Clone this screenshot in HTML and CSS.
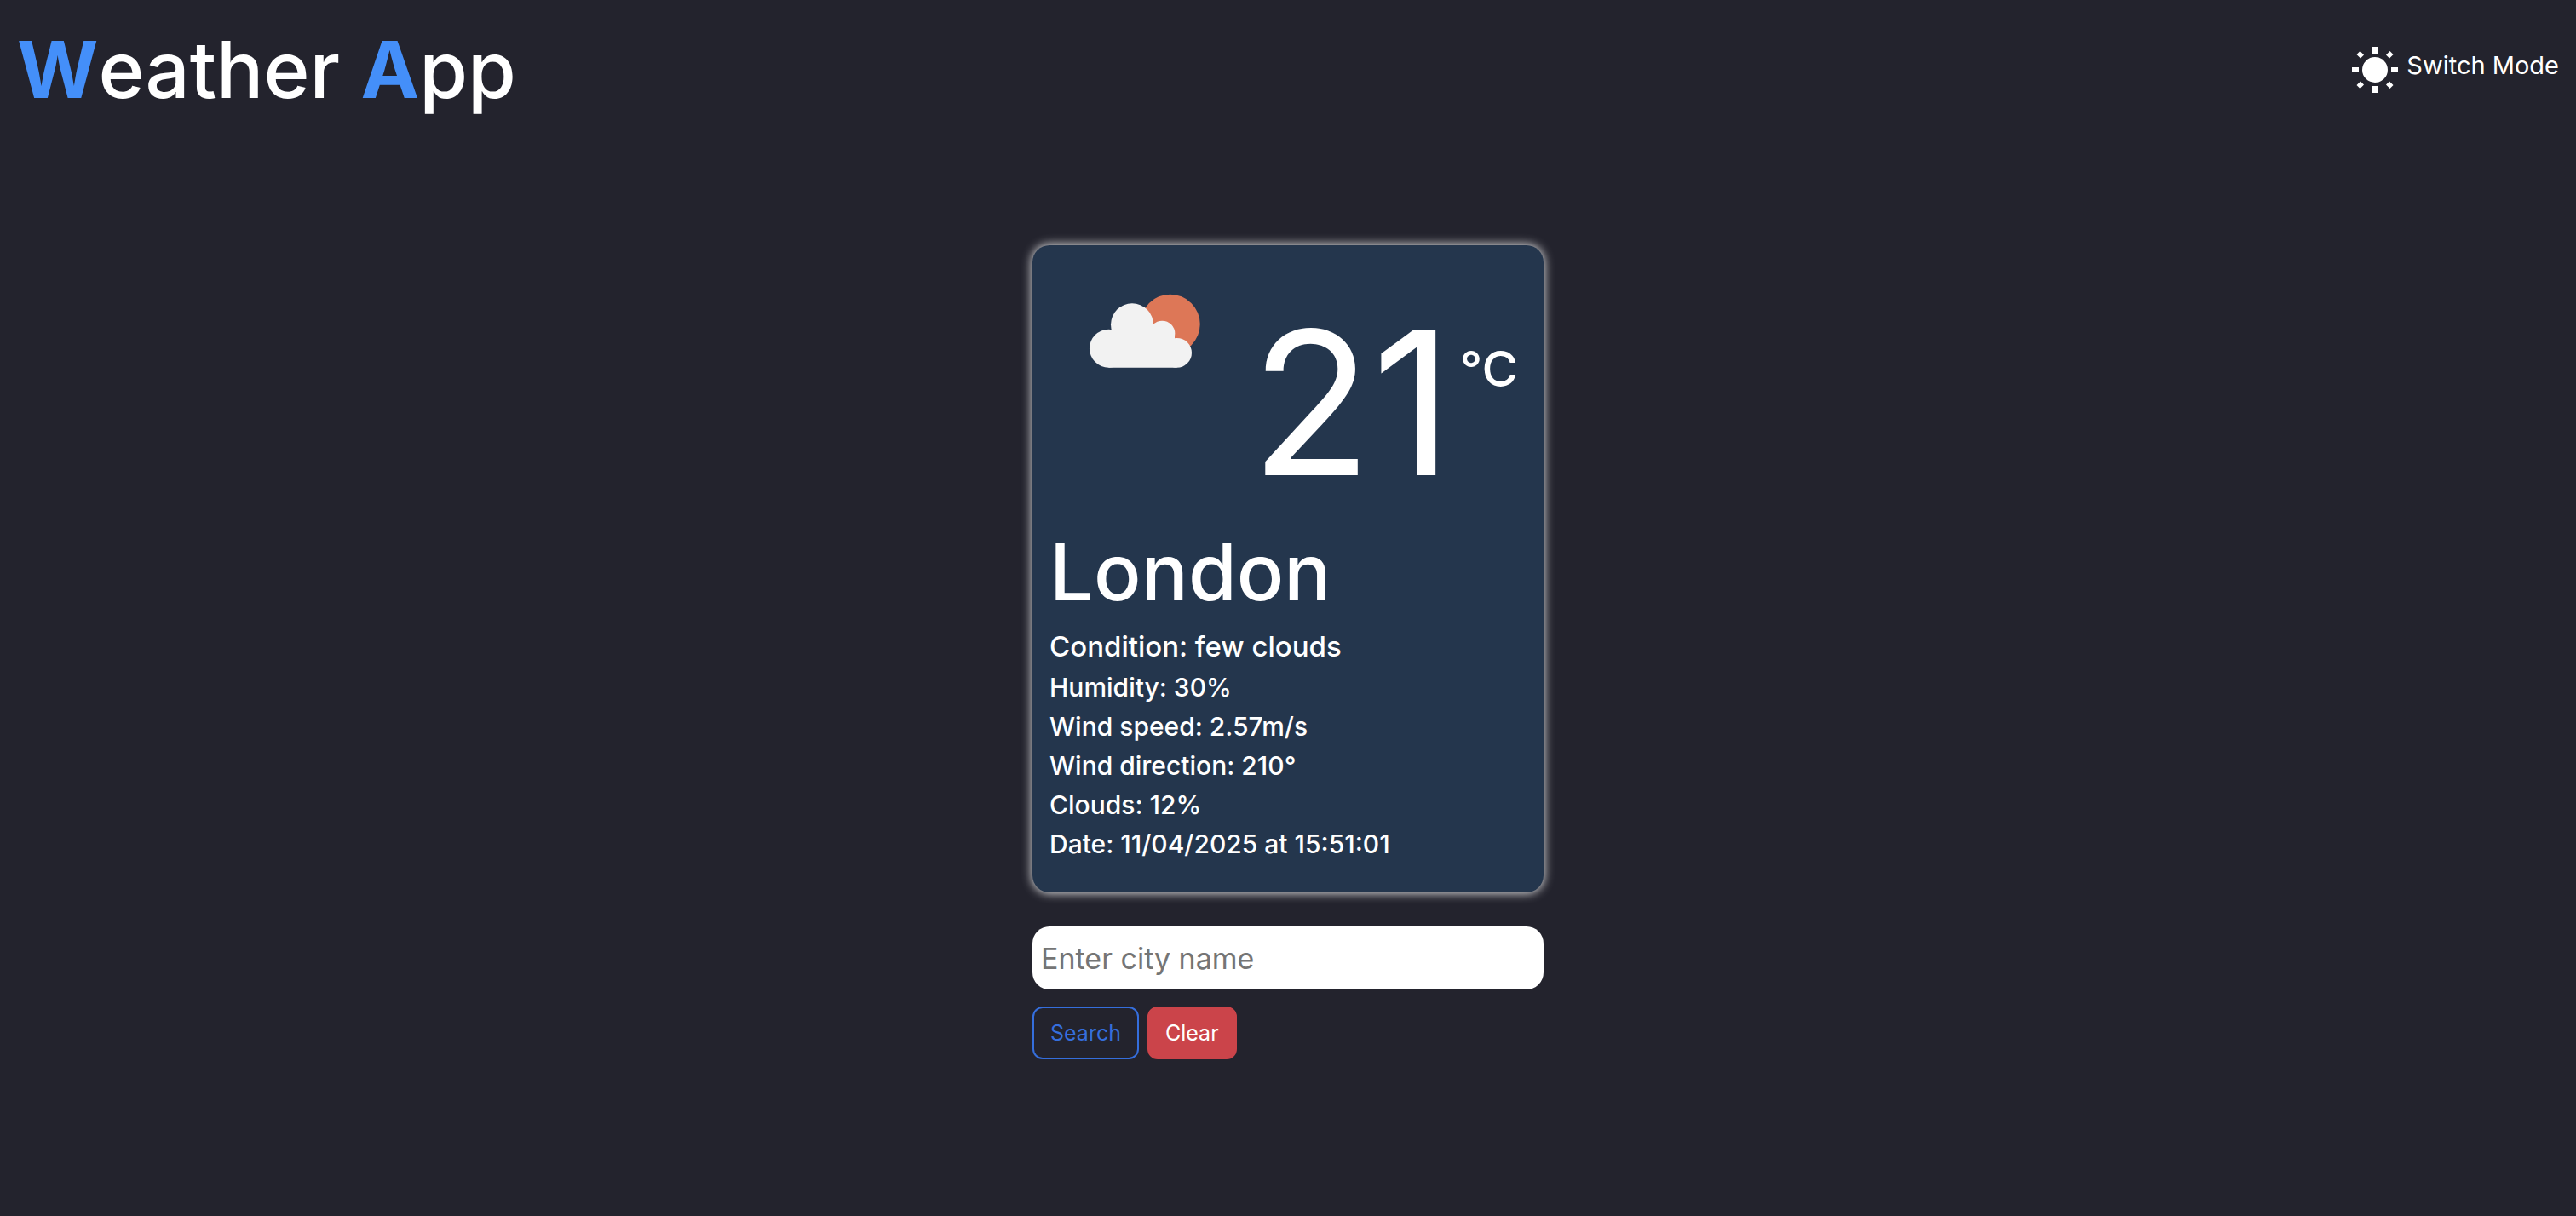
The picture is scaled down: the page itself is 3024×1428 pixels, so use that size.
FILE: index.html
```html
<!DOCTYPE html>
<html lang="en">
<head>
<meta charset="utf-8">
<meta name="viewport" content="width=device-width, initial-scale=1">
<title>Weather App</title>
<link rel="stylesheet" href="styles.css">
</head>
<body>
<header class="header">
  <h1 class="title"><span class="accent">W</span>eather <span class="accent">A</span>pp</h1>
  <button class="mode" type="button">
    <svg class="mode-icon" viewBox="0 0 54 54" aria-hidden="true">
      <circle cx="27" cy="27" r="15"/>
      <path d="M24 0h6v8h-6zM24 46h6v8h-6zM0 24h8v6H0zM46 24h8v6h-8z"/>
      <path d="M9.500 5l4.500 4.500-4 4L5.500 9zM44.500 5l4 4-4.500 4.500-4-4zM9.500 49l4.500-4.500-4-4L5.500 45zM44.500 49l4-4-4.500-4.500-4 4z"/>
    </svg>
    <span class="mode-label">Switch Mode</span>
  </button>
</header>
<main class="main">
  <section class="card">
    <div class="summary">
      <svg class="weather-icon" viewBox="0 0 132 90" role="img" aria-label="few clouds">
        <circle cx="95.700" cy="36.700" r="35" fill="#dd7757"/>
        <g fill="#f2f2f2">
          <circle cx="23.500" cy="65.200" r="22.500"/>
          <circle cx="51" cy="37.300" r="25"/>
          <circle cx="86.300" cy="47.700" r="15"/>
          <circle cx="103.600" cy="70.300" r="17.400"/>
          <path d="M23.500 87.700V48H101v6l2.600 33.700z"/>
        </g>
      </svg>
      <p class="temp"><span class="degrees">21</span><span class="unit">°C</span></p>
    </div>
    <h2 class="city">London</h2>
    <h3 class="condition">Condition: few clouds</h3>
    <ul class="details">
      <li>Humidity: 30%</li>
      <li>Wind speed: 2.57m/s</li>
      <li>Wind direction: 210°</li>
      <li>Clouds: 12%</li>
      <li>Date: 11/04/2025 at 15:51:01</li>
    </ul>
  </section>
  <form class="search">
    <input class="search-input" type="text" placeholder="Enter city name" aria-label="City name">
    <div class="actions">
      <button class="btn btn-search" type="submit">Search</button>
      <button class="btn btn-clear" type="reset">Clear</button>
    </div>
  </form>
</main>
</body>
</html>
```

FILE: styles.css
```css
* { box-sizing: border-box; margin: 0; padding: 0; }

body {
  min-height: 100vh;
  background: #23232d;
  color: #fff;
  font-family: Inter, "Liberation Sans", sans-serif;
}

.header {
  display: flex;
  justify-content: space-between;
  align-items: center;
  padding: 22px 20px;
}

.title { font-size: 92px; line-height: 120px; font-weight: 500; }
.accent { color: #448ff9; font-weight: 700; }

.mode {
  display: flex;
  align-items: flex-start;
  gap: 10px;
  border: 0;
  background: none;
  color: inherit;
  font: inherit;
  cursor: pointer;
}
.mode-icon { width: 54px; height: 54px; fill: #fff; }
.mode-label { font-size: 29px; line-height: 44px; }

.main {
  max-width: 600px;
  margin: 0 auto;
  padding-top: 124px;
}

.card {
  padding: 56px 20px 34px;
  border-radius: 20px;
  background: #24364d;
  box-shadow: 0 0 12px 1px rgba(255, 255, 255, 0.85);
}

.summary {
  display: flex;
  justify-content: space-between;
  align-items: flex-start;
  padding: 0 10px 0 46px;
}
.weather-icon { width: 132px; height: 90px; }

.temp { display: flex; align-items: flex-start; gap: 8px; }
.degrees { font-size: 234px; line-height: 258px; }
.unit { font-size: 58px; line-height: 178px; font-weight: 500; }

.city { margin: 10px 0 4px; font-size: 92px; line-height: 120px; font-weight: 500; }
.condition { margin-bottom: 2px; font-size: 33px; line-height: 46px; font-weight: 500; }
.details { list-style: none; font-size: 30px; line-height: 46px; font-weight: 500; }

.search { display: grid; gap: 20px; margin-top: 40px; }
.search-input {
  width: 100%;
  height: 74px;
  padding: 0 10px;
  border: 0;
  border-radius: 20px;
  background: #fff;
  color: #23232d;
  font: inherit;
  font-size: 34px;
}
.search-input::placeholder { color: #757575; opacity: 1; }

.actions { display: flex; gap: 10px; }
.btn {
  height: 62px;
  padding: 0 19px;
  border: 2px solid;
  border-radius: 12px;
  font: inherit;
  font-size: 25px;
  cursor: pointer;
}
.btn-search { border-color: #356edc; background: none; color: #356edc; }
.btn-clear { border-color: #cb444a; background: #cb444a; color: #fff; }
```
